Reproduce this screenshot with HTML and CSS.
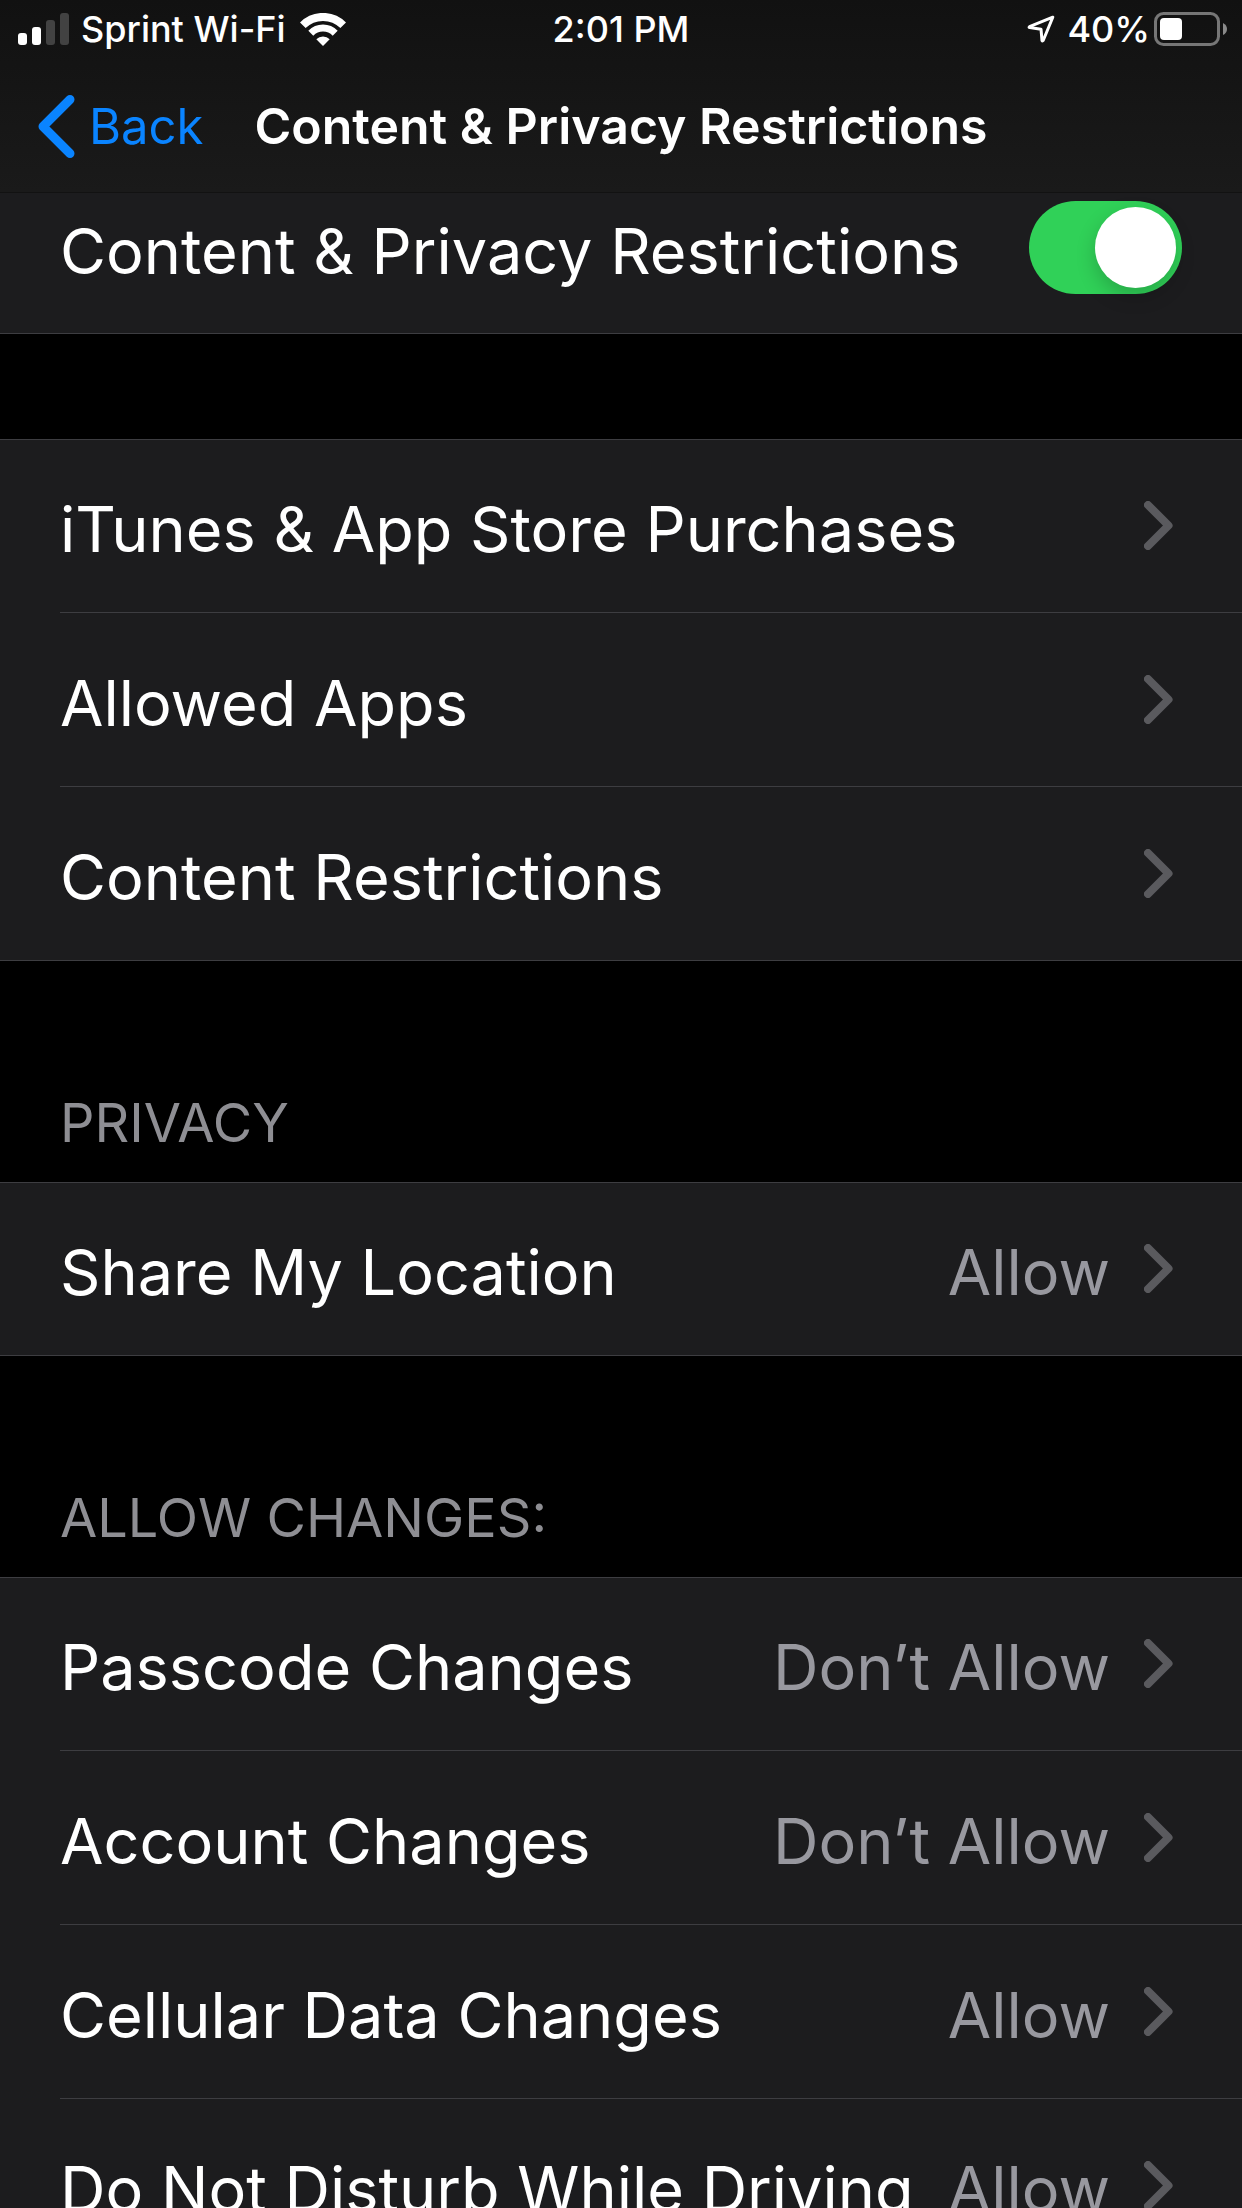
FILE: index.html
```html
<!DOCTYPE html>
<html lang="en">
<head>
<meta charset="utf-8">
<meta name="viewport" content="width=device-width, initial-scale=1">
<title>Content &amp; Privacy Restrictions</title>
<link rel="stylesheet" href="styles.css">
</head>
<body>
<svg class="sprite" aria-hidden="true">
  <symbol id="chevron" viewBox="0 0 29 49"><path d="M4 4 24.5 24.5 4 45" fill="none" stroke="currentColor" stroke-width="8" stroke-linecap="round" stroke-linejoin="round"/></symbol>
</svg>
<div class="screen">
  <header class="top">
    <div class="status">
      <div class="status-left">
        <svg class="signal" width="51" height="32" viewBox="0 0 51 32" fill="#fff" aria-label="Signal strength" role="img">
          <rect x="0" y="20" width="9" height="12" rx="3"/>
          <rect x="14" y="14" width="9" height="18" rx="3"/>
          <g fill="#424242"><rect x="28" y="7" width="9" height="25" rx="3"/><rect x="42" y="0" width="9" height="32" rx="3"/></g>
        </svg>
        <span class="carrier">Sprint Wi-Fi</span>
        <svg width="46" height="33" viewBox="0 0 46 33" aria-label="Wi-Fi" role="img">
          <g fill="none" stroke="#fff" stroke-width="8">
            <path d="M2.800 12.300A28.500 28.500 0 0 1 43.200 12.300"/>
            <path d="M10.800 20.200A17.200 17.200 0 0 1 35.200 20.200" stroke-width="7"/>
          </g>
          <path d="M16.300 26.300A9.500 9.500 0 0 1 29.700 26.300L23 33Z" fill="#fff"/>
        </svg>
      </div>
      <span>2:01 PM</span>
      <div class="status-right">
        <svg width="28" height="28" viewBox="0 0 28 28" aria-label="Location in use" role="img"><path d="M25.800 2.200 2.500 11.700Q1.600 12.300 2.600 12.600L14 14.200 15 25.500Q15.500 26.500 16.200 25.500Z" fill="none" stroke="#fff" stroke-width="3" stroke-linejoin="round"/></svg>
        <span class="percent">40%</span>
        <svg width="74" height="34" viewBox="0 0 74 34" aria-label="Battery" role="img">
          <rect x="1.500" y="1.500" width="63" height="31" rx="8" fill="none" stroke="#767676" stroke-width="3"/>
          <rect x="6" y="6" width="22" height="22" rx="4" fill="#fff"/>
          <path d="M69 11Q73 13 73 17T69 23Z" fill="#8a8a8a"/>
        </svg>
      </div>
    </div>
    <nav class="nav">
      <a class="back" href="#back">
        <svg width="37" height="63" viewBox="0 0 37 63" aria-hidden="true"><path d="M32 4.500 5 31.500 32 58.500" fill="none" stroke="currentColor" stroke-width="9" stroke-linecap="round" stroke-linejoin="round"/></svg>
        Back
      </a>
      <h1 class="title">Content &amp; Privacy Restrictions</h1>
    </nav>
  </header>
  <main class="content">
    <div class="group">
      <label class="row row-switch">
        <span class="label">Content &amp; Privacy Restrictions</span>
        <input class="switch" type="checkbox" role="switch" checked>
      </label>
    </div>
    <ul class="group group-spaced">
      <li><a class="row" href="#purchases"><span class="label">iTunes &amp; App Store Purchases</span><svg class="chevron" aria-hidden="true"><use href="#chevron"/></svg></a></li>
      <li><a class="row" href="#apps"><span class="label">Allowed Apps</span><svg class="chevron" aria-hidden="true"><use href="#chevron"/></svg></a></li>
      <li><a class="row" href="#content"><span class="label">Content Restrictions</span><svg class="chevron" aria-hidden="true"><use href="#chevron"/></svg></a></li>
    </ul>
    <h2 class="heading">PRIVACY</h2>
    <ul class="group">
      <li><a class="row" href="#location"><span class="label">Share My Location</span><span class="value">Allow</span><svg class="chevron" aria-hidden="true"><use href="#chevron"/></svg></a></li>
    </ul>
    <h2 class="heading">ALLOW CHANGES:</h2>
    <ul class="group">
      <li><a class="row" href="#passcode"><span class="label">Passcode Changes</span><span class="value">Don’t Allow</span><svg class="chevron" aria-hidden="true"><use href="#chevron"/></svg></a></li>
      <li><a class="row" href="#account"><span class="label">Account Changes</span><span class="value">Don’t Allow</span><svg class="chevron" aria-hidden="true"><use href="#chevron"/></svg></a></li>
      <li><a class="row" href="#cellular"><span class="label">Cellular Data Changes</span><span class="value">Allow</span><svg class="chevron" aria-hidden="true"><use href="#chevron"/></svg></a></li>
      <li><a class="row" href="#driving"><span class="label">Do Not Disturb While Driving</span><span class="value">Allow</span><svg class="chevron" aria-hidden="true"><use href="#chevron"/></svg></a></li>
    </ul>
  </main>
</div>
</body>
</html>
```
FILE: styles.css
```css
* {
  box-sizing: border-box;
}

body {
  margin: 0;
  background: #000;
  color: #fff;
  font-family: Inter, "Liberation Sans", sans-serif;
}

a {
  color: inherit;
  text-decoration: none;
}

.sprite {
  display: none;
}

.screen {
  display: flex;
  flex-direction: column;
  height: 100vh;
}

/* Status bar and navigation bar */
.top {
  z-index: 1;
  flex: none;
  background: linear-gradient(#111, #1a1a1a);
  border-bottom: 1px solid #121212;
}

.status {
  display: grid;
  grid-template-columns: 1fr auto 1fr;
  align-items: center;
  height: 60px;
  padding: 0 14px 2px;
  font-size: 36px;
  font-weight: 500;
  line-height: 58px;
}

.status-left,
.status-right {
  display: flex;
  align-items: center;
}

.status-left {
  padding-left: 4px;
}

.status-right {
  justify-content: flex-end;
}

.carrier {
  margin: 0 14px 0 12px;
}

.percent {
  margin: 0 4px 0 12px;
}

.nav {
  display: grid;
  grid-template-columns: 1fr auto 1fr;
  align-items: center;
  height: 132px;
  padding: 0 38px;
}

.back {
  display: flex;
  align-items: center;
  gap: 14px;
  color: #0a84ff;
  font-size: 49px;
}

.title {
  margin: 0;
  font-size: 50px;
  font-weight: 600;
}

/* Scrolling list, its first row partly under the bar */
.content {
  flex: 1;
  min-height: 0;
  margin-top: -33px;
  overflow: hidden auto;
  scrollbar-width: none;
}

.group {
  margin: 0;
  padding: 0;
  list-style: none;
  background: #1c1c1e;
  box-shadow: inset 0 1px #3d3d41, inset 0 -1px #3d3d41;
}

.group-spaced {
  margin-top: 105px;
}

.group li {
  padding-left: 60px;
}

.row {
  display: flex;
  align-items: center;
  height: 174px;
  padding-right: 69px;
  border-bottom: 1px solid #3d3d41;
  font-size: 63px;
  line-height: 80px;
  white-space: nowrap;
}

.row-switch {
  padding: 2px 60px 0;
}

.label {
  flex: 1;
  padding-top: 7px;
}

.value {
  padding-top: 7px;
  color: #98989f;
}

.chevron {
  flex: none;
  width: 29px;
  height: 49px;
  margin-left: 34px;
  color: #5a5a5e;
}

.heading {
  display: flex;
  align-items: flex-end;
  height: 221px;
  margin: 0;
  padding: 0 60px 26px;
  color: #8e8e93;
  font-size: 54px;
  font-weight: 400;
  line-height: 66px;
}

.switch {
  flex: none;
  width: 153px;
  height: 93px;
  margin: 0;
  padding: 6px;
  appearance: none;
  border-radius: 47px;
  background: #39393d;
}

.switch::before {
  display: block;
  width: 81px;
  height: 81px;
  border-radius: 50%;
  background: #fff;
  box-shadow: 0 8px 20px rgb(0 0 0 / 20%);
  content: "";
}

.switch:checked {
  background: #30d158;
}

.switch:checked::before {
  margin-left: auto;
}
```
